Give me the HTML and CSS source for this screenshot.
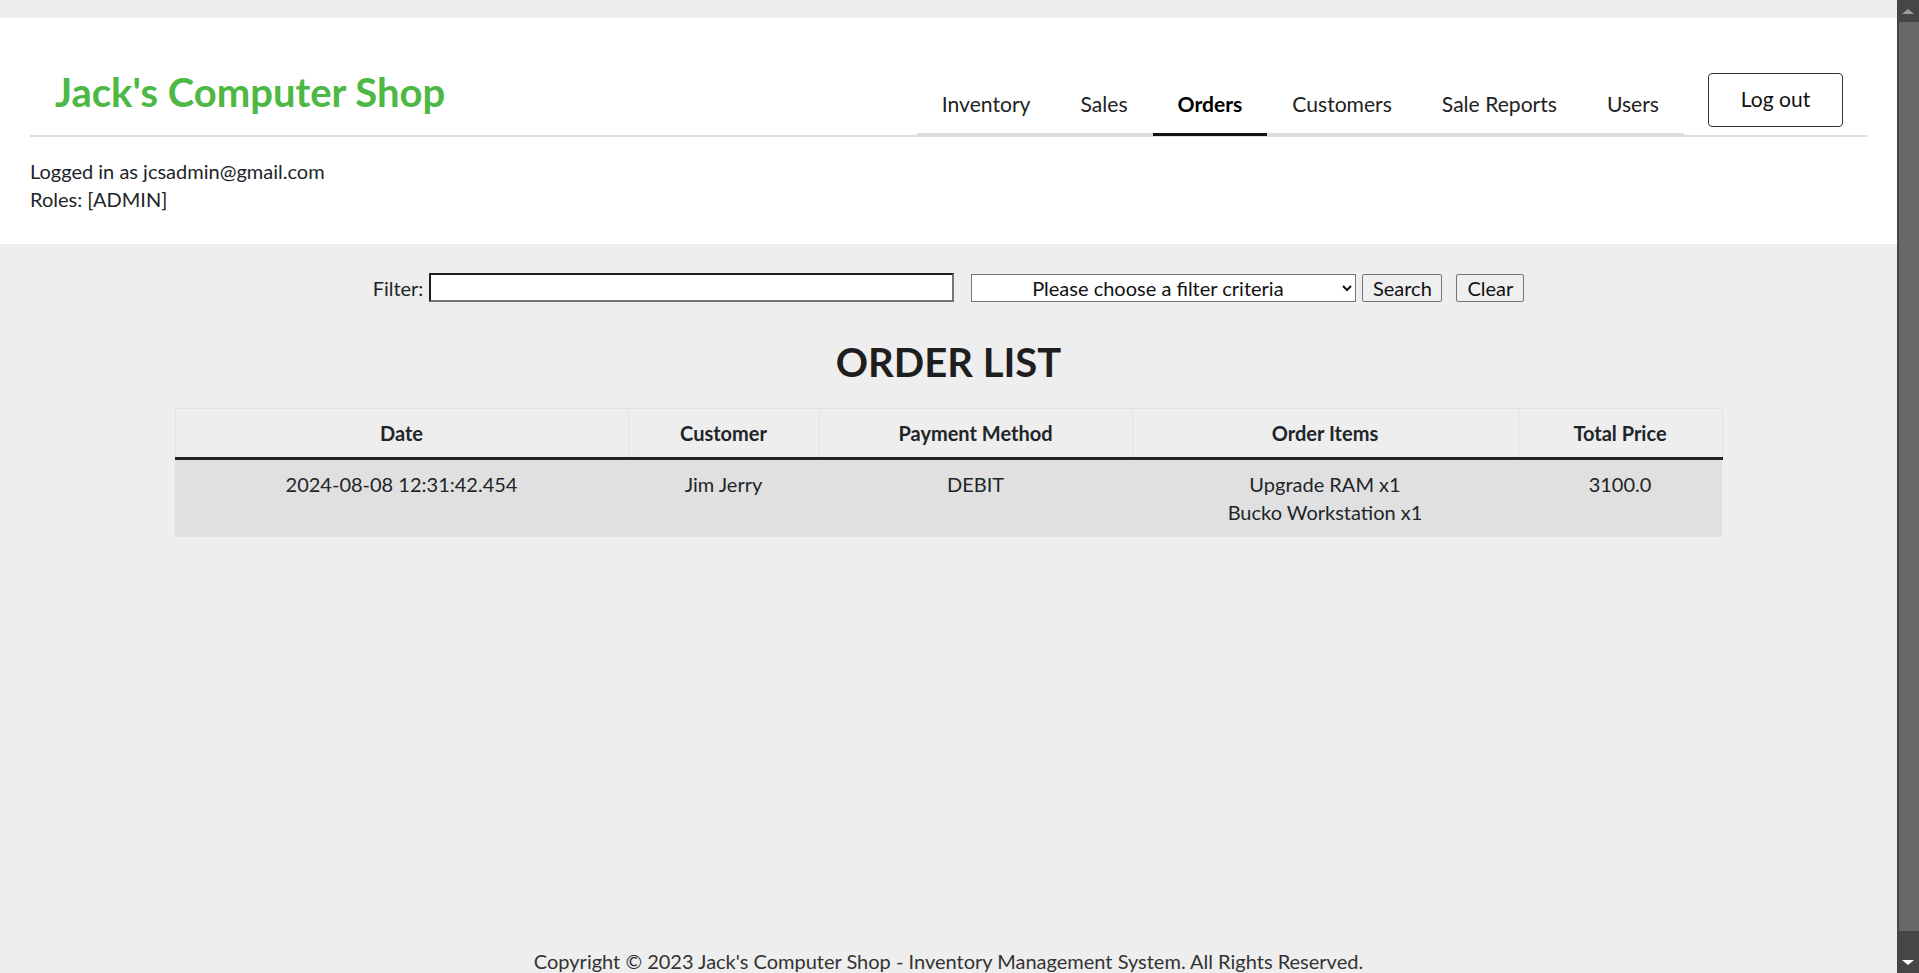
FILE: index.html
```html
<!DOCTYPE html>
<html lang="en">
<head>
<meta charset="utf-8">
<title>Jack's Computer Shop - Orders</title>
<link rel="stylesheet" href="styles.css">
</head>
<body class="app">
<div class="viewport">
  <div class="page">
    <header class="site-header">
      <div class="header-bar">
        <h1 class="brand">Jack's Computer Shop</h1>
        <nav class="main-nav">
          <a class="nav-link" href="#">Inventory</a>
          <a class="nav-link" href="#">Sales</a>
          <a class="nav-link active" href="#">Orders</a>
          <a class="nav-link" href="#">Customers</a>
          <a class="nav-link" href="#">Sale Reports</a>
          <a class="nav-link" href="#">Users</a>
        </nav>
        <button class="logout" type="button">Log out</button>
      </div>
      <div class="user-info">
        <div>Logged in as jcsadmin@gmail.com</div>
        <div>Roles: [ADMIN]</div>
      </div>
    </header>

    <main class="main">
      <form class="filter-form">
        <label class="filter-label" for="filter">Filter:</label>
        <input class="filter-input" id="filter" type="text">
        <select class="filter-select">
          <option>Please choose a filter criteria</option>
        </select>
        <button class="btn btn-search" type="button">Search</button>
        <button class="btn btn-clear" type="button">Clear</button>
      </form>

      <h2 class="list-title">ORDER LIST</h2>

      <table class="orders">
        <colgroup>
          <col class="c-date"><col class="c-customer"><col class="c-payment"><col class="c-items"><col class="c-total">
        </colgroup>
        <thead>
          <tr>
            <th>Date</th>
            <th>Customer</th>
            <th>Payment Method</th>
            <th>Order Items</th>
            <th>Total Price</th>
          </tr>
        </thead>
        <tbody>
          <tr>
            <td>2024-08-08 12:31:42.454</td>
            <td>Jim Jerry</td>
            <td>DEBIT</td>
            <td>Upgrade RAM x1<br>Bucko Workstation x1</td>
            <td>3100.0</td>
          </tr>
        </tbody>
      </table>
    </main>

    <footer class="site-footer">Copyright © 2023 Jack's Computer Shop - Inventory Management System. All Rights Reserved.</footer>
  </div>
</div>
<div class="scrollbar" aria-hidden="true">
  <div class="sb-btn sb-up"><span class="tri-up"></span></div>
  <div class="sb-track"><div class="sb-thumb"></div></div>
  <div class="sb-btn sb-down"><span class="tri-down"></span></div>
</div>
</body>
</html>
```

FILE: styles.css
```css
html, body {
  margin: 0;
  height: 100%;
}

body.app {
  display: flex;
  overflow: hidden;
  background: #eeeeee;
  color: #212529;
  font-family: Lato, "Open Sans", sans-serif;
  font-size: 20px;
  line-height: 1.4;
}

.viewport {
  flex: 1;
  min-width: 0;
  overflow: hidden;
}

.page {
  min-height: calc(100vh + 22px);
  display: flex;
  flex-direction: column;
}

/* Header */
.site-header {
  background: #ffffff;
  margin-top: 18px;
  padding: 0 30px 31px;
}

.header-bar {
  height: 117px;
  display: flex;
  align-items: flex-end;
  border-bottom: 2px solid #dddddd;
}

.brand {
  margin: 0 auto 19px 25px;
  font-size: 40px;
  line-height: 48px;
  font-weight: 700;
  color: #4db843;
}

.main-nav {
  display: flex;
  margin-bottom: -1px;
}

.nav-link {
  padding: 0 25px 15px;
  font-size: 21.1px;
  line-height: 28px;
  border-bottom: 3px solid #dddddd;
  color: #222222;
  text-decoration: none;
}

.nav-link.active {
  border-bottom-color: #111111;
  color: #000000;
  font-weight: 700;
}

.logout {
  width: 135px;
  height: 54px;
  margin: 0 24px 8px;
  padding: 0 0 4px;
  background: #ffffff;
  border: 1px solid #333333;
  border-radius: 4px;
  font-family: inherit;
  font-size: 21px;
  color: #111111;
}

.user-info {
  margin-top: 20px;
}

/* Main */
.main {
  flex: 1;
  padding-top: 29px;
}

.filter-form {
  display: flex;
  justify-content: center;
  align-items: center;
  height: 29px;
  margin: 0;
}

.filter-label {
  margin-right: 6px;
}

.filter-input {
  box-sizing: border-box;
  width: 525px;
  height: 29px;
  margin: 0 17px 0 0;
  background: #ffffff;
  border-style: solid;
  border-width: 2px;
  border-color: #1e1e1e #767676 #767676 #1e1e1e;
}

.filter-select {
  box-sizing: border-box;
  width: 385px;
  height: 28px;
  margin: 0 6px 0 0;
  background: #ffffff;
  border: 1px solid #767676;
  border-radius: 0;
  font-family: inherit;
  font-size: 20px;
  color: #111111;
  text-align: center;
  text-align-last: center;
}

.btn {
  box-sizing: border-box;
  height: 28px;
  padding: 0;
  background: #efefef;
  border: 1px solid #767676;
  border-radius: 2px;
  font-family: inherit;
  font-size: 20px;
  color: #111111;
}

.btn-search {
  width: 80px;
  margin-right: 14px;
}

.btn-clear {
  width: 68px;
}

.list-title {
  margin: 36px 0 22px;
  font-size: 40px;
  line-height: 48px;
  font-weight: 700;
  text-align: center;
  color: #1e1e1e;
}

/* Table */
.orders {
  width: 1547px;
  margin: 0 auto;
  border-collapse: collapse;
  table-layout: fixed;
}

.c-date { width: 453px; }
.c-customer { width: 191px; }
.c-payment { width: 313px; }
.c-items { width: 386px; }
.c-total { width: 204px; }

.orders th,
.orders td {
  padding: 10px;
  text-align: center;
  vertical-align: top;
}

.orders th {
  font-weight: 700;
  border: 1px solid #dee2e6;
  border-bottom: 3px solid #212529;
}

.orders tbody tr {
  background: #e0e0e0;
}

.orders td {
  padding-bottom: 11px;
}

/* Footer */
.site-footer {
  padding-bottom: 20px;
  text-align: center;
  color: #333333;
}

/* Scrollbar */
.scrollbar {
  width: 22px;
  display: flex;
  flex-direction: column;
  background: #464646;
}

.sb-btn {
  height: 22px;
  display: flex;
  justify-content: center;
  align-items: center;
}

.tri-up {
  width: 0;
  height: 0;
  border-left: 6px solid transparent;
  border-right: 6px solid transparent;
  border-bottom: 5px solid #9e9e9e;
}

.tri-down {
  width: 0;
  height: 0;
  border-left: 6px solid transparent;
  border-right: 6px solid transparent;
  border-top: 5px solid #ffffff;
}

.sb-track {
  flex: 1;
  display: flex;
  padding: 0 0 20px 2px;
}

.sb-thumb {
  flex: 1;
  background: #686868;
}
```
